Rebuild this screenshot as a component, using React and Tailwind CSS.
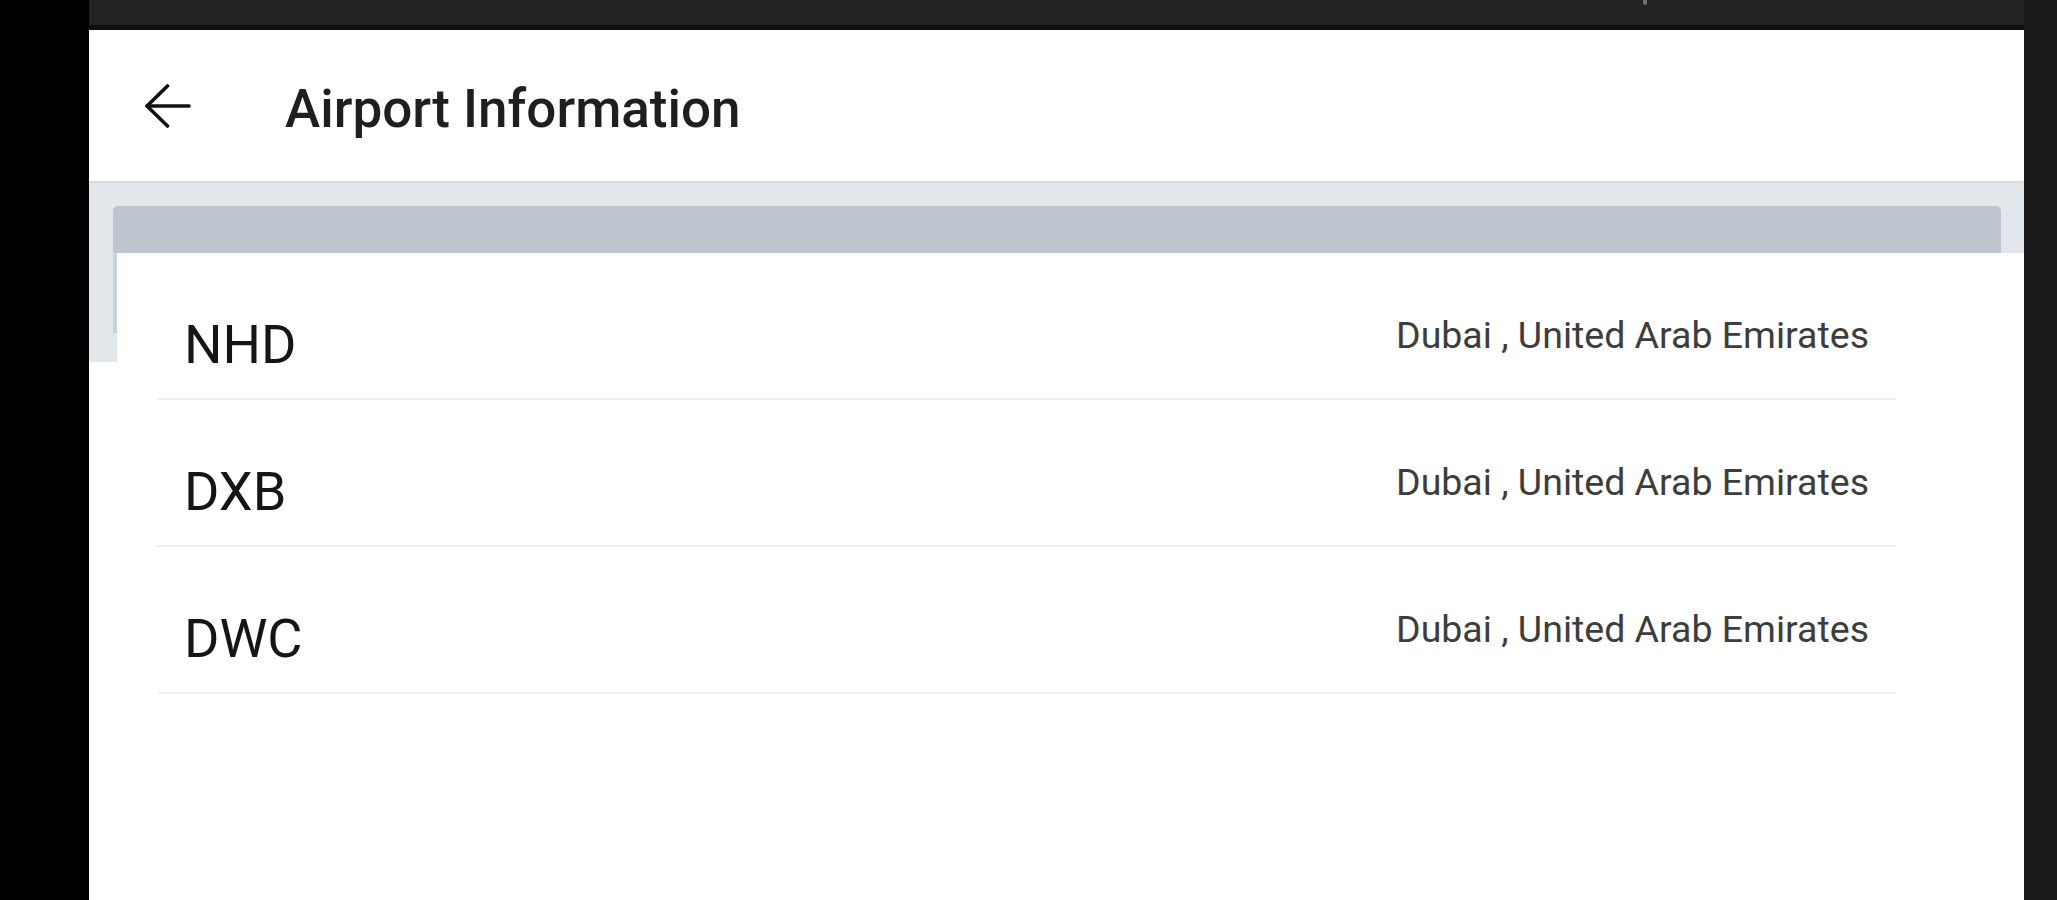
import React from 'react';

const airports = [
  { code: 'NHD', place: 'Dubai , United Arab Emirates' },
  { code: 'DXB', place: 'Dubai , United Arab Emirates' },
  { code: 'DWC', place: 'Dubai , United Arab Emirates' },
];

function BackArrow() {
  return (
    <svg width="46" height="44" viewBox="0 0 46 44" fill="none" stroke="#111" strokeWidth="3.6" strokeLinecap="round" strokeLinejoin="round">
      <path d="M44 22H2" />
      <path d="M22.5 2L2 22l20.5 20" />
    </svg>
  );
}

export default function App() {
  return (
    <div className="flex h-[900px] w-full overflow-hidden bg-black font-[Roboto,sans-serif]">
      {/* device frame, left */}
      <div className="w-[89px] shrink-0 bg-black"></div>

      <div className="flex min-w-0 flex-1 flex-col bg-white">
        {/* status bar */}
        <div className="flex h-[30px] shrink-0 border-b-[5px] border-[#0e0e0e] bg-[#222222]">
          <div className="ml-[1554px] h-[5px] w-[4px] rounded-b-sm bg-[#6d6d6d]"></div>
        </div>

        {/* app bar */}
        <div className="flex h-[153px] shrink-0 items-center border-b-2 border-[#d8dce0] bg-white pl-[56px]">
          <BackArrow />
          <h1 className="ml-[94px] mt-[8px] text-[53px] font-medium leading-none text-[#1f1f1f]">Airport Information</h1>
        </div>

        {/* content */}
        <div className="flex flex-1 flex-col bg-white">
          <div className="h-[179px] shrink-0 bg-[#e2e7ec] pl-[24px] pr-[23px] pt-[23px]">
            <div className="h-[47px] rounded-t-[5px] bg-[#bdc6cf]"></div>
            <div className="h-[80px] w-[4px] bg-[#c9d1d9]"></div>
          </div>

          <div className="relative -mt-[109px] ml-[28px] flex-1 bg-white">
            <div className="ml-[40px] mr-[128px]">
              {airports.map((a) => (
                <div key={a.code} className="flex h-[147px] items-start justify-between border-b-2 border-[#f0f0f0] px-[27px] pt-[64px]">
                  <span className="mt-[1px] text-[54px] leading-none text-[#151515]">{a.code}</span>
                  <span className="text-[37.5px] leading-none text-[#3d3d3d]">{a.place}</span>
                </div>
              ))}
            </div>
          </div>
        </div>
      </div>

      {/* device frame, right */}
      <div className="w-[33px] shrink-0 bg-[#1b1b1b]"></div>
    </div>
  );
}
